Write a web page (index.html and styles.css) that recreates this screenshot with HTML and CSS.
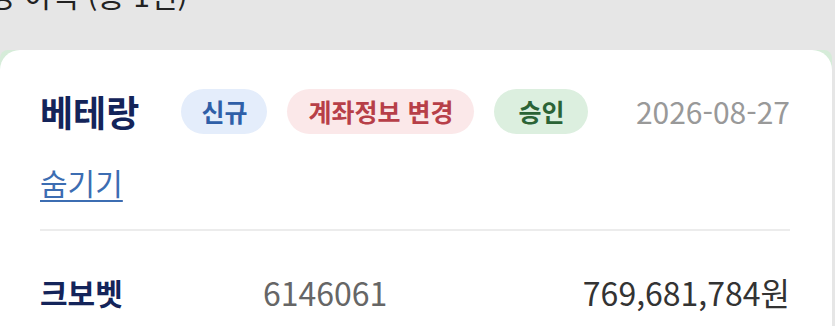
FILE: index.html
```html
<!DOCTYPE html>
<html lang="ko">
<head>
    <meta charset="UTF-8">
    <meta name="viewport" content="width=device-width, initial-scale=1.0">
    <title>변경 이력</title>
    <link rel="stylesheet" href="styles.css">
</head>
<body>
    <div class="page">
        <h2 class="section-title">변경 이력 (총 1건)</h2>

        <div class="card-wrap">
            <div class="card">
                <div class="card-head">
                    <span class="name">베테랑</span>
                    <span class="badge badge-new">신규</span>
                    <span class="badge badge-change">계좌정보 변경</span>
                    <span class="badge badge-ok">승인</span>
                    <span class="date">2026-08-27</span>
                </div>
                <a href="#" class="toggle">숨기기</a>

                <div class="detail-row">
                    <span class="bank">크보벳</span>
                    <span class="account">6146061</span>
                    <span class="amount">769,681,784원</span>
                </div>
            </div>
        </div>
    </div>
</body>
</html>
```

FILE: styles.css
```css
body {
    margin: 0;
    background-color: #e6e6e6;
    font-family: "Noto Sans CJK KR", "Noto Sans", sans-serif;
    overflow: hidden;
}
.page {
    width: 832px;
}
.section-title {
    margin: -26px 0 0 -40px;
    font-size: 30px;
    font-weight: 400;
    line-height: 40px;
    color: #222;
    height: 32px;
}
.card-wrap {
    margin-top: 44px;
    background-color: #d6ecd9; /* green strip peeking at the corners */
    border-radius: 8px 8px 0 0;
}
.card {
    background-color: #fff;
    border-radius: 20px 20px 0 0;
    padding: 38px 42px 14px 40px;
}
.card-head {
    display: flex;
    align-items: center;
    height: 46px;
}
.name {
    font-size: 36px;
    font-weight: 700;
    color: #14245a;
    margin-right: 42px;
}
.badge {
    display: inline-flex;
    align-items: center;
    height: 45px;
    padding: 0 20px;
    border-radius: 23px;
    font-size: 25px;
    font-weight: 700;
    margin-right: 20px;
}
.badge-new {
    background-color: #e4edfb;
    color: #2f5fa8;
}
.badge-change {
    background-color: #fbe8e9;
    color: #b73f48;
    padding: 0 21px;
}
.badge-ok {
    background-color: #dcefdf;
    color: #2b6336;
    padding: 0 24px;
}
.date {
    margin-left: auto;
    font-size: 30px;
    color: #999;
}
.toggle {
    display: inline-block;
    margin-top: 28px;
    font-size: 30px;
    line-height: 40px;
    color: #3c6db2;
    text-decoration: underline;
    text-decoration-thickness: 2px;
    text-underline-offset: 5px;
    padding-bottom: 27px;
}
.detail-row {
    display: flex;
    align-items: center;
    border-top: 2px solid #ececec;
    padding-top: 38px;
}
.bank {
    width: 223px;
    font-size: 30px;
    font-weight: 700;
    color: #14245a;
}
.account {
    font-size: 32px;
    color: #666;
}
.amount {
    margin-left: auto;
    font-size: 32px;
    color: #333;
}
```
